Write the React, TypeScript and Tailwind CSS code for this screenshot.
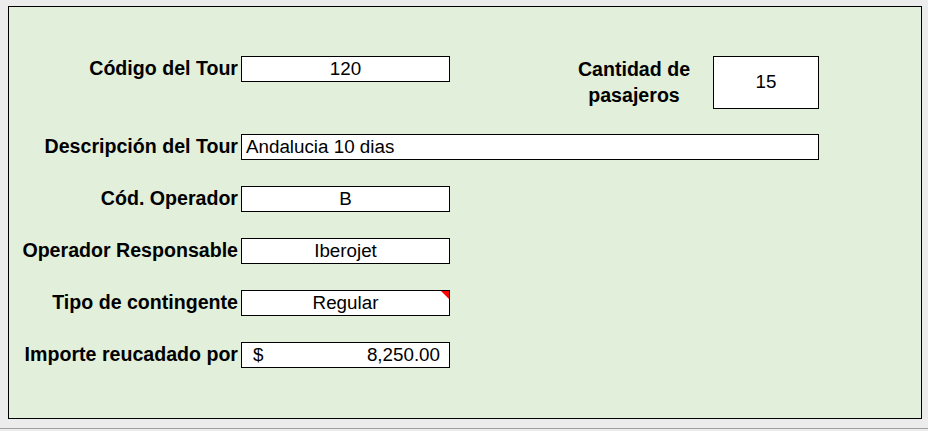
const labelCls =
  "w-[229px] h-[26px] flex items-center justify-end font-bold text-[19.6px] leading-none whitespace-nowrap";
const boxCls =
  "relative ml-[3px] h-[26px] border border-black bg-white flex items-center text-[18.8px] leading-none";

function Row({ label, children, className = "" }: { label: string; children: React.ReactNode; className?: string }) {
  return (
    <div className={"flex items-start " + className}>
      <div className={labelCls}>{label}</div>
      {children}
    </div>
  );
}

export default function App() {
  return (
    <div className="w-[928px] h-[431px] bg-[#ececec] flex flex-col font-['Liberation_Sans',Arial,sans-serif] text-black">
      <div className="ml-[8px] mt-[6px] w-[914px] h-[413px] border border-black bg-[#e2efda] pt-[49px]">
        <Row label="Código del Tour">
          <div className={boxCls + " w-[209px] justify-center"}>120</div>
          <div className="ml-[110px] w-[148px] h-[52px] flex flex-col justify-center text-center font-bold text-[19.6px] leading-[26px]">
            <span>Cantidad de</span>
            <span>pasajeros</span>
          </div>
          <div className="ml-[5px] w-[106px] h-[53px] border border-black bg-white flex items-center justify-center text-[18.8px]">
            15
          </div>
        </Row>
        <Row label="Descripción del Tour" className="mt-[25px]">
          <div className={boxCls + " w-[578px] pl-[4px]"}>Andalucia 10 dias</div>
        </Row>
        <Row label="Cód. Operador" className="mt-[26px]">
          <div className={boxCls + " w-[209px] justify-center"}>B</div>
        </Row>
        <Row label="Operador Responsable" className="mt-[26px]">
          <div className={boxCls + " w-[209px] justify-center"}>Iberojet</div>
        </Row>
        <Row label="Tipo de contingente" className="mt-[26px]">
          <div className={boxCls + " w-[209px] justify-center"}>
            Regular
            <span className="absolute top-0 right-0 w-0 h-0 border-l-[8px] border-l-transparent border-t-[8px] border-t-[#ff0000]" />
          </div>
        </Row>
        <Row label="Importe reucadado por" className="mt-[26px]">
          <div className={boxCls + " w-[209px] justify-between pl-[11px] pr-[9px]"}>
            <span>$</span>
            <span>8,250.00</span>
          </div>
        </Row>
      </div>
      <div className="mt-[9px] h-px bg-[#a0a0a0]" />
    </div>
  );
}
